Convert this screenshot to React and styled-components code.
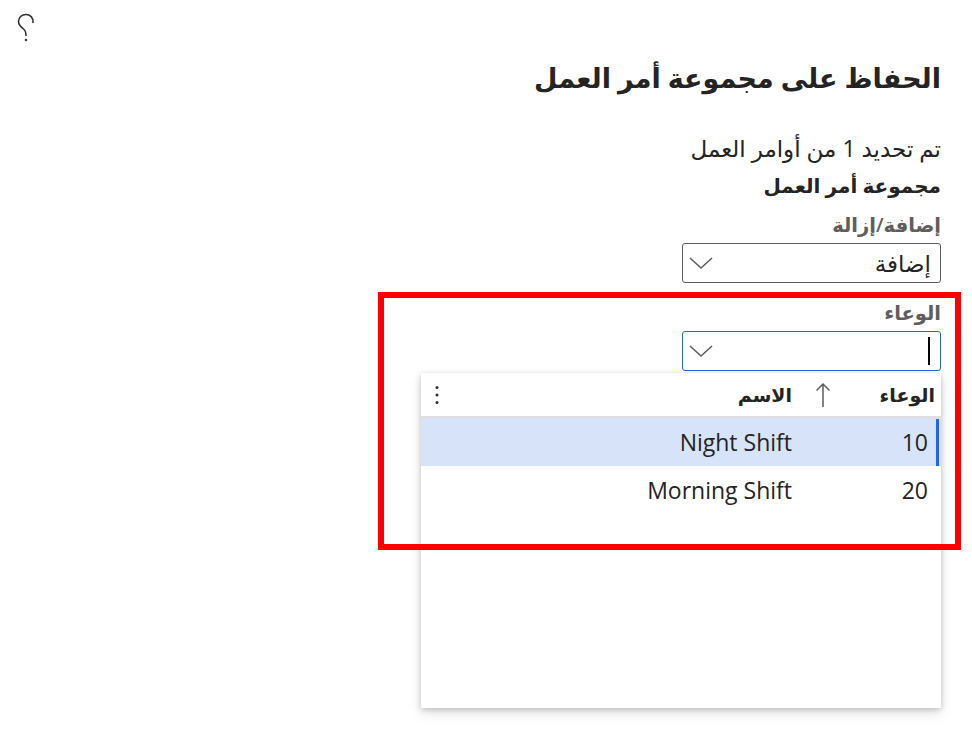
import React from 'react';
import styled, { createGlobalStyle } from 'styled-components';

const GlobalStyle = createGlobalStyle`
  html, body {
    margin: 0;
    padding: 0;
    background: #ffffff;
  }
  body {
    font-family: "Open Sans", "DejaVu Sans", sans-serif;
    color: #242424;
  }
`;

const Page = styled.div`
  position: relative;
  width: 972px;
  height: 740px;
  background: #fff;
  overflow: hidden;
`;

const TopBar = styled.div`
  height: 60px;
  display: flex;
  align-items: flex-start;
  padding: 12px 0 0 16px;
  box-sizing: border-box;
`;

const HelpButton = styled.button`
  border: none;
  background: none;
  padding: 0;
  width: 20px;
  height: 30px;
  display: flex;
`;

const HelpIcon = () => (
  <svg width="20" height="30" viewBox="0 0 20 30">
    <path
      d="M17 10.5 C17.5 5.5 14 2.5 10 2.5 C5.5 2.5 2.5 5.5 2.5 9.5 C2.5 13 5.5 15.5 8 17.5 C9.5 18.8 10 20 10 22.5 V23.5"
      fill="none"
      stroke="#323130"
      strokeWidth="1.6"
      strokeLinecap="round"
    />
    <circle cx="10" cy="28" r="1.2" fill="#323130" />
  </svg>
);

const Content = styled.div`
  direction: rtl;
  padding-right: 31px;
  display: flex;
  flex-direction: column;
  align-items: flex-start;
`;

const Title = styled.h1`
  margin: 0;
  font-size: 27px;
  font-weight: 600;
  line-height: 36px;
  color: #242424;
`;

const Summary = styled.div`
  margin-top: 39px;
  font-size: 23px;
  line-height: 26px;
`;

const GroupTitle = styled.div`
  margin-top: 12px;
  font-size: 20px;
  font-weight: 700;
  line-height: 26px;
`;

const Field = styled.div`
  position: relative;
  margin-top: ${(p) => p.$top}px;
  display: flex;
  flex-direction: column;
  align-items: flex-start;
`;

const Label = styled.label`
  font-size: 19.5px;
  font-weight: 600;
  line-height: 26px;
  color: #605e5c;
  margin-bottom: 5px;
`;

const SelectBox = styled.div`
  width: 259px;
  height: 40px;
  box-sizing: border-box;
  border: 1px solid ${(p) => (p.$focused ? '#2266e3' : '#605e5c')};
  border-radius: 3px;
  display: flex;
  align-items: center;
  justify-content: space-between;
  padding: 0 9px 0 5px;
  font-size: 23px;
`;

const Caret = styled.span`
  width: 2px;
  height: 28px;
  background: #000;
  margin-right: 1px;
`;

const Chevron = () => (
  <svg width="26" height="16" viewBox="0 0 26 16">
    <path d="M2 3 L13 13 L24 3" fill="none" stroke="#605e5c" strokeWidth="1.6" />
  </svg>
);

const Dropdown = styled.div`
  position: absolute;
  top: calc(100% + 2px);
  right: 0;
  width: 520px;
  height: 335px;
  background: #fff;
  box-shadow: 0 2px 6px rgba(0, 0, 0, 0.22), 0 6px 14px rgba(0, 0, 0, 0.08);
`;

const Row = styled.div`
  position: relative;
  display: grid;
  grid-template-columns: 140px 1fr 40px;
  align-items: center;
  height: ${(p) => (p.$header ? 45 : 48)}px;
  box-sizing: border-box;
  font-size: ${(p) => (p.$header ? 19 : 23)}px;
  font-weight: ${(p) => (p.$header ? 700 : 400)};
  background: ${(p) => (p.$selected ? '#d6e3f8' : 'transparent')};
  border-bottom: ${(p) => (p.$header ? '2px solid #e1dfdd' : 'none')};
`;

const Cell = styled.div`
  display: flex;
  align-items: center;
  justify-content: space-between;
  padding-right: ${(p) => p.$pr}px;
  padding-left: ${(p) => p.$pl || 0}px;
  white-space: nowrap;
`;

const SelectedBar = styled.span`
  position: absolute;
  right: 2px;
  top: 1px;
  bottom: 0;
  width: 3px;
  background: #2266e3;
`;

const MoreButton = styled.div`
  display: flex;
  justify-content: flex-end;
  padding-left: 14px;
`;

const Annotation = styled.div`
  position: absolute;
  left: 378px;
  top: 292px;
  width: 583px;
  height: 258px;
  box-sizing: border-box;
  border: 6px solid #ff0000;
  pointer-events: none;
`;

const SortUp = () => (
  <svg width="16" height="26" viewBox="0 0 16 26">
    <path d="M8 25 V2 M1.5 8.5 L8 2 L14.5 8.5" fill="none" stroke="#605e5c" strokeWidth="1.5" />
  </svg>
);

const Dots = () => (
  <svg width="4" height="20" viewBox="0 0 4 20">
    <circle cx="2" cy="2.5" r="1.5" fill="#323130" />
    <circle cx="2" cy="10" r="1.5" fill="#323130" />
    <circle cx="2" cy="17.5" r="1.5" fill="#323130" />
  </svg>
);

const rows = [
  { id: '10', name: 'Night Shift' },
  { id: '20', name: 'Morning Shift' },
];

export default function App() {
  return (
    <Page>
      <GlobalStyle />
      <TopBar>
        <HelpButton aria-label="تعليمات">
          <HelpIcon />
        </HelpButton>
      </TopBar>
      <Content>
        <Title>الحفاظ على مجموعة أمر العمل</Title>
        <Summary>تم تحديد 1 من أوامر العمل</Summary>
        <GroupTitle>مجموعة أمر العمل</GroupTitle>

        <Field $top={13}>
          <Label>إضافة/إزالة</Label>
          <SelectBox>
            <span>إضافة</span>
            <Chevron />
          </SelectBox>
        </Field>

        <Field $top={17}>
          <Label>الوعاء</Label>
          <SelectBox $focused>
            <Caret />
            <Chevron />
          </SelectBox>
          <Dropdown>
            <Row $header>
              <Cell $pr={6} $pl={14}>
                <span>الوعاء</span>
                <SortUp />
              </Cell>
              <Cell $pr={9}>الاسم</Cell>
              <MoreButton>
                <Dots />
              </MoreButton>
            </Row>
            {rows.map((r, i) => (
              <Row key={r.id} $selected={i === 0}>
                {i === 0 && <SelectedBar />}
                <Cell $pr={13}>{r.id}</Cell>
                <Cell $pr={9}>{r.name}</Cell>
                <span />
              </Row>
            ))}
          </Dropdown>
        </Field>
      </Content>
      <Annotation />
    </Page>
  );
}
